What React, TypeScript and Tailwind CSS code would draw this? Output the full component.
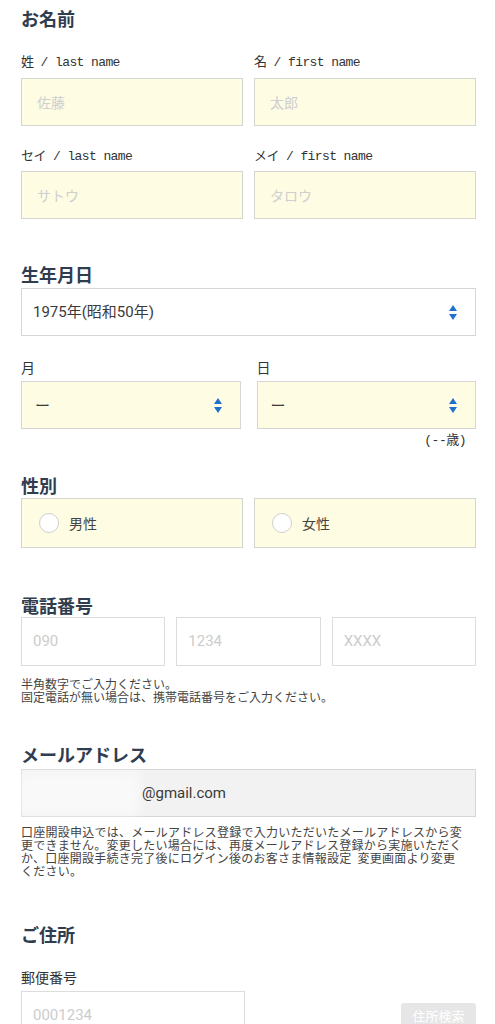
const jp = "font-['Noto_Sans_CJK_JP',sans-serif]";
const mono = "font-['Liberation_Mono','Noto_Sans_CJK_JP',monospace]";
const roboto = "font-['Roboto','Noto_Sans_CJK_JP',sans-serif]";

const Heading = ({ children, className = "" }: { children: React.ReactNode; className?: string }) => (
  <h2 className={`text-[18px] leading-[24px] font-bold text-[#2f3d4f] ${jp} ${className}`}>{children}</h2>
);

const Label = ({ children, className = "" }: { children: React.ReactNode; className?: string }) => (
  <div className={`text-[13px] leading-[16px] tracking-[-0.6px] text-[#333] ${mono} ${className}`}>{children}</div>
);

const Arrows = () => (
  <svg width="8" height="15" viewBox="0 0 8 15" className="shrink-0">
    <path d="M0 6 L4 0 L8 6 Z" fill="#1f6fd0" />
    <path d="M0 9 L8 9 L4 15 Z" fill="#1f6fd0" />
  </svg>
);

const YellowInput = ({ placeholder }: { placeholder: string }) => (
  <div className={`h-[48px] border border-[#d6d6d0] bg-[#fefce2] px-[15px] flex items-center text-[14px] text-[#cfcfcf] ${jp}`}>
    {placeholder}
  </div>
);

const WhiteInput = ({ placeholder }: { placeholder: string }) => (
  <div className={`h-[49px] border border-[#dcdcdc] bg-white px-[11px] flex items-center text-[15px] text-[#cccccc] ${roboto}`}>
    {placeholder}
  </div>
);

const Select = ({ value, yellow }: { value: string; yellow?: boolean }) => (
  <div
    className={`h-[48px] border border-[#d6d6d6] ${yellow ? "bg-[#fefce2] pl-[13px]" : "bg-white pl-[11px]"} pr-[18px] flex items-center justify-between text-[15px] text-[#3a3a3a] ${yellow ? jp : roboto}`}
  >
    <span>{value}</span>
    <Arrows />
  </div>
);

const Radio = ({ label }: { label: string }) => (
  <div className={`h-[50px] border border-[#d6d6d0] bg-[#fefce2] pl-[17px] flex items-center gap-[10px] text-[14px] text-[#444] ${jp}`}>
    <span className="w-[20px] h-[20px] rounded-full bg-white border border-[#cfcfcf]" />
    <span>{label}</span>
  </div>
);

export default function App() {
  return (
    <div className="w-[495px] min-h-[1024px] bg-white pl-[21px] pr-[19px] pt-[6px] overflow-hidden">
      {/* お名前 */}
      <Heading>お名前</Heading>
      <div className="grid grid-cols-2 gap-x-[11px] mt-[25px]">
        <div>
          <Label>姓 / last name</Label>
          <div className="mt-[7px]">
            <YellowInput placeholder="佐藤" />
          </div>
        </div>
        <div>
          <Label>名 / first name</Label>
          <div className="mt-[7px]">
            <YellowInput placeholder="太郎" />
          </div>
        </div>
      </div>
      <div className="grid grid-cols-2 gap-x-[11px] mt-[23px]">
        <div>
          <Label>セイ / last name</Label>
          <div className="mt-[6px]">
            <YellowInput placeholder="サトウ" />
          </div>
        </div>
        <div>
          <Label>メイ / first name</Label>
          <div className="mt-[6px]">
            <YellowInput placeholder="タロウ" />
          </div>
        </div>
      </div>

      {/* 生年月日 */}
      <Heading className="mt-[43px]">生年月日</Heading>
      <div className="mt-[2px]">
        <Select value="1975年(昭和50年)" />
      </div>
      <div className="grid grid-cols-2 gap-x-[16px] mt-[23px]">
        <div>
          <div className={`text-[14px] leading-[16px] text-[#333] ${jp}`}>月</div>
          <div className="mt-[6px]">
            <Select value="ー" yellow />
          </div>
        </div>
        <div>
          <div className={`text-[14px] leading-[16px] text-[#333] ${jp}`}>日</div>
          <div className="mt-[6px]">
            <Select value="ー" yellow />
          </div>
        </div>
      </div>
      <div className={`mt-[4px] pr-[10px] text-right text-[13px] leading-[16px] tracking-[-0.5px] text-[#333] ${mono}`}>(--歳)</div>

      {/* 性別 */}
      <Heading className="mt-[24px]">性別</Heading>
      <div className="grid grid-cols-2 gap-x-[11px] mt-[1px]">
        <Radio label="男性" />
        <Radio label="女性" />
      </div>

      {/* 電話番号 */}
      <Heading className="mt-[45px]">電話番号</Heading>
      <div className="grid grid-cols-3 gap-x-[11px]">
        <WhiteInput placeholder="090" />
        <WhiteInput placeholder="1234" />
        <WhiteInput placeholder="XXXX" />
      </div>
      <p className={`mt-[11px] text-[12px] leading-[13px] text-[#444] ${jp}`}>
        半角数字でご入力ください。
        <br />
        固定電話が無い場合は、携帯電話番号をご入力ください。
      </p>

      {/* メールアドレス */}
      <Heading className="mt-[39px]">メールアドレス</Heading>
      <div className="relative mt-[3px] h-[48px] border border-[#d6d6d6] bg-[#f2f2f2] flex items-center pl-[120px] text-[15px] text-[#3a3a3a]">
        <div className="absolute left-[-6px] top-[2px] h-[44px] w-[124px] bg-white/55 blur-[6px]" />
        <span className={`relative ${roboto}`}>@gmail.com</span>
      </div>
      <p className={`mt-[8px] text-[12px] leading-[13px] tracking-[0.25px] text-[#444] ${jp}`}>
        口座開設申込では、メールアドレス登録で入力いただいたメールアドレスから変
        <br />
        更できません。変更したい場合には、再度メールアドレス登録から実施いただく
        <br />
        か、口座開設手続き完了後にログイン後のお客さま情報設定&nbsp; 変更画面より変更
        <br />
        ください。
      </p>

      {/* ご住所 */}
      <Heading className="mt-[45px]">ご住所</Heading>
      <div className={`mt-[23px] text-[14px] leading-[16px] text-[#333] ${jp}`}>郵便番号</div>
      <div className="mt-[6px] flex items-center justify-between">
        <div className={`w-[224px] h-[49px] border border-[#dcdcdc] bg-white px-[11px] flex items-center text-[15px] text-[#cccccc] ${roboto}`}>
          0001234
        </div>
        <button className={`w-[75px] h-[26px] rounded-[3px] bg-[#e6e6e6] text-white text-[13px] ${jp}`}>住所検索</button>
      </div>
    </div>
  );
}
